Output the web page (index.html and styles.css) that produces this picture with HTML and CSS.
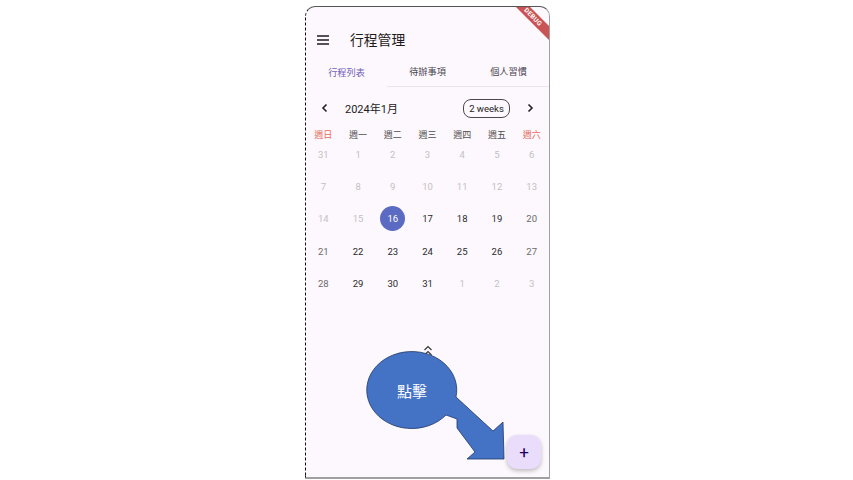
FILE: index.html
```html
<!DOCTYPE html>
<html lang="zh-Hant">
<head>
<meta charset="utf-8">
<title>行程管理</title>
<link rel="stylesheet" href="styles.css">
</head>
<body>
<div class="phone">
  <div class="appbar">
    <svg class="menu" width="12" height="10" viewBox="0 0 12 10"><path d="M0 1h12M0 5h12M0 9h12" stroke="#1d1b20" stroke-width="1.5"/></svg>
    <div class="title">行程管理</div>
  </div>
  <div class="tabs">
    <div class="tab active">行程列表</div>
    <div class="tab line">待辦事項</div>
    <div class="tab line">個人習慣</div>
  </div>
  <div class="calhead">
    <svg class="chev" width="20" height="12" viewBox="0 0 20 12"><path d="M11.5 2.5L8 6l3.5 3.5" fill="none" stroke="#222" stroke-width="1.6"/></svg>
    <div class="month">2024年1月</div>
    <div class="fmt">2 weeks</div>
    <svg class="chev right" width="20" height="12" viewBox="0 0 20 12"><path d="M8.5 2.5L12 6 8.5 9.5" fill="none" stroke="#222" stroke-width="1.6"/></svg>
  </div>
  <div class="dow">
    <span class="wkend">週日</span><span>週一</span><span>週二</span><span>週三</span><span>週四</span><span>週五</span><span class="wkend">週六</span>
  </div>
  <div class="days">
    <span class="off">31</span><span class="off">1</span><span class="off">2</span><span class="off">3</span><span class="off">4</span><span class="off">5</span><span class="off">6</span>
    <span class="off">7</span><span class="off">8</span><span class="off">9</span><span class="off">10</span><span class="off">11</span><span class="off">12</span><span class="off">13</span>
    <span class="off">14</span><span class="off">15</span><span class="sel"><i>16</i></span><span>17</span><span>18</span><span>19</span><span class="we">20</span>
    <span class="we">21</span><span>22</span><span>23</span><span>24</span><span>25</span><span>26</span><span class="we">27</span>
    <span class="we">28</span><span>29</span><span>30</span><span>31</span><span class="off">1</span><span class="off">2</span><span class="off">3</span>
  </div>
  <div class="handle">
    <svg width="10" height="11" viewBox="0 0 10 11"><path d="M1.5 5L5 1.5 8.5 5M1.5 10L5 6.5 8.5 10" fill="none" stroke="#333" stroke-width="1.1"/></svg>
  </div>

  <svg class="callout" width="243" height="470" viewBox="306 7 243 470">
    <path d="M456 397 A45 38.5 0 1 0 446 415 L457 419 L457 428 L475 452 L467 459 L504 459 L503 422 L493 431 Z" fill="#4472c4" stroke="#1f3864" stroke-width="0.8" stroke-linejoin="miter"/>
    <text x="412" y="397" text-anchor="middle" class="ctext">點擊</text>
  </svg>

  <div class="fab">+</div>
  <div class="debug">DEBUG</div>
</div>
</body>
</html>
```
FILE: styles.css
```css
* { box-sizing: border-box; }
html, body { margin: 0; background: #ffffff; }
body {
  display: flex;
  padding: 6px 0 0 305px;
  font-family: Roboto, "Noto Sans CJK TC", sans-serif;
}
.phone {
  position: relative;
  width: 245px;
  height: 473px;
  border-top: 1px solid #555;
  border-left: 1px dashed #111;
  border-right: 1px solid #a0a0a0;
  border-bottom: 2px solid #a0a0a0;
  border-radius: 10px 10px 0 0;
  background: #fdf8fd;
  overflow: hidden;
  display: flex;
  flex-direction: column;
}
.appbar {
  height: 49px;
  padding: 16px 0 0 11px;
  display: flex;
  align-items: center;
}
.appbar > * { flex: none; }
.menu { display: block; }
.title {
  margin-left: 21px;
  font-size: 13.8px;
  color: #1d1b20;
  line-height: 33px;
  font-family: "Noto Sans CJK TC", sans-serif;
}
.tabs {
  height: 31px;
  display: grid;
  grid-template-columns: repeat(3, 1fr);
}
.tab {
  display: flex;
  align-items: center;
  justify-content: center;
  font-size: 9.2px;
  color: #49454f;
  font-family: "Noto Sans CJK TC", sans-serif;
}
.tab.active { color: #7062b8; }
.tab.line { border-bottom: 1px solid #ebe4ec; }
.calhead {
  margin-top: 9px;
  height: 24px;
  display: flex;
  align-items: center;
  padding: 0 9px;
}
.chev { display: block; flex: none; }
.chev.right { margin-left: 10px; }
.month {
  flex: 1;
  margin-left: 10px;
  font-size: 11px;
  color: #1d1b20;
}
.fmt {
  width: 47px;
  height: 19px;
  border: 1px solid #4a4a4a;
  border-radius: 8px;
  font-size: 9.5px;
  color: #222;
  display: flex;
  align-items: center;
  justify-content: center;
}
.dow {
  margin-top: 2px;
  height: 16px;
  display: grid;
  grid-template-columns: repeat(7, 1fr);
  align-items: end;
}
.dow span {
  text-align: center;
  font-size: 9px;
  line-height: 7px;
  color: #4f4f4f;
  font-family: "Noto Sans CJK TC", sans-serif;
}
.dow .wkend { color: #e56a5c; }
.days {
  display: grid;
  grid-template-columns: repeat(7, 1fr);
  grid-auto-rows: 32.3px;
}
.days span {
  display: flex;
  align-items: center;
  justify-content: center;
  font-size: 9.5px;
  color: #2a2a2a;
}
.days .off { color: #c3bfc3; }
.days .we { color: #6a6a6a; }
.days .sel i {
  font-style: normal;
  width: 25px;
  height: 25px;
  border-radius: 50%;
  background: #5b6ac2;
  color: #fff;
  display: flex;
  align-items: center;
  justify-content: center;
}
.handle {
  margin-top: 46px;
  height: 11px;
  display: flex;
  justify-content: center;
}
.handle svg { display: block; }
.callout {
  position: absolute;
  left: 0;
  top: 0;
}
.ctext {
  font-family: "Noto Sans CJK TC", sans-serif;
  font-size: 15px;
  fill: #ffffff;
}
.fab {
  position: absolute;
  right: 8px;
  bottom: 8px;
  width: 34px;
  height: 34px;
  border-radius: 10px;
  background: #e9ddfb;
  box-shadow: 0 2px 4px rgba(0,0,0,0.25);
  color: #21005d;
  font-size: 17px;
  line-height: 34px;
  text-align: center;
}
.debug {
  position: absolute;
  left: 192px;
  top: 5px;
  width: 70px;
  height: 10px;
  background: rgba(183, 28, 28, 0.75);
  color: #fff;
  font-size: 6.5px;
  font-weight: bold;
  letter-spacing: 0.3px;
  line-height: 10px;
  text-align: center;
  transform: rotate(45deg);
}
```
